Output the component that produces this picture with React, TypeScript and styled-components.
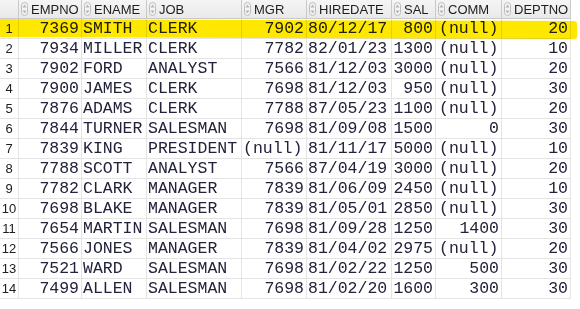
import React from "react";
import styled, { createGlobalStyle } from "styled-components";

type Emp = {
  empno: number;
  ename: string;
  job: string;
  mgr: number | null;
  hiredate: string;
  sal: number;
  comm: number | null;
  deptno: number;
};

const rows: Emp[] = [
  { empno: 7369, ename: "SMITH", job: "CLERK", mgr: 7902, hiredate: "80/12/17", sal: 800, comm: null, deptno: 20 },
  { empno: 7934, ename: "MILLER", job: "CLERK", mgr: 7782, hiredate: "82/01/23", sal: 1300, comm: null, deptno: 10 },
  { empno: 7902, ename: "FORD", job: "ANALYST", mgr: 7566, hiredate: "81/12/03", sal: 3000, comm: null, deptno: 20 },
  { empno: 7900, ename: "JAMES", job: "CLERK", mgr: 7698, hiredate: "81/12/03", sal: 950, comm: null, deptno: 30 },
  { empno: 7876, ename: "ADAMS", job: "CLERK", mgr: 7788, hiredate: "87/05/23", sal: 1100, comm: null, deptno: 20 },
  { empno: 7844, ename: "TURNER", job: "SALESMAN", mgr: 7698, hiredate: "81/09/08", sal: 1500, comm: 0, deptno: 30 },
  { empno: 7839, ename: "KING", job: "PRESIDENT", mgr: null, hiredate: "81/11/17", sal: 5000, comm: null, deptno: 10 },
  { empno: 7788, ename: "SCOTT", job: "ANALYST", mgr: 7566, hiredate: "87/04/19", sal: 3000, comm: null, deptno: 20 },
  { empno: 7782, ename: "CLARK", job: "MANAGER", mgr: 7839, hiredate: "81/06/09", sal: 2450, comm: null, deptno: 10 },
  { empno: 7698, ename: "BLAKE", job: "MANAGER", mgr: 7839, hiredate: "81/05/01", sal: 2850, comm: null, deptno: 30 },
  { empno: 7654, ename: "MARTIN", job: "SALESMAN", mgr: 7698, hiredate: "81/09/28", sal: 1250, comm: 1400, deptno: 30 },
  { empno: 7566, ename: "JONES", job: "MANAGER", mgr: 7839, hiredate: "81/04/02", sal: 2975, comm: null, deptno: 20 },
  { empno: 7521, ename: "WARD", job: "SALESMAN", mgr: 7698, hiredate: "81/02/22", sal: 1250, comm: 500, deptno: 30 },
  { empno: 7499, ename: "ALLEN", job: "SALESMAN", mgr: 7698, hiredate: "81/02/20", sal: 1600, comm: 300, deptno: 30 },
];

const columns = ["EMPNO", "ENAME", "JOB", "MGR", "HIREDATE", "SAL", "COMM", "DEPTNO"];

const GlobalStyle = createGlobalStyle`
  html, body {
    margin: 0;
    padding: 0;
    background: #ffffff;
  }
`;

function SortIcon() {
  return (
    <svg width="7" height="14" viewBox="0 0 7 14">
      <rect x="0.5" y="0.5" width="6" height="13" rx="3" fill="#f4f4f4" stroke="#bdbdbd" />
      <path d="M3.5 2.5 L5.5 5.5 L1.5 5.5 Z" fill="#b4b4b4" />
      <path d="M3.5 11.5 L5.5 8.5 L1.5 8.5 Z" fill="#b4b4b4" />
    </svg>
  );
}

export default function App() {
  const num = (v: number | null) => (v === null ? "(null)" : String(v));
  return (
    <>
      <GlobalStyle />
      <Sheet>
        <Grid>
          <HeadCell />
          {columns.map((c) => (
            <HeadCell key={c}>
              <SortIcon />
              <HeadLabel>{c}</HeadLabel>
            </HeadCell>
          ))}
          {rows.map((r, i) => (
            <React.Fragment key={r.empno}>
              <RowNum>{i + 1}</RowNum>
              <Cell $right>{r.empno}</Cell>
              <Cell>{r.ename}</Cell>
              <Cell>{r.job}</Cell>
              <Cell $right={r.mgr !== null}>{num(r.mgr)}</Cell>
              <Cell>{r.hiredate}</Cell>
              <Cell $right>{r.sal}</Cell>
              <Cell $right={r.comm !== null} $pad={r.comm === null}>
                {num(r.comm)}
              </Cell>
              <Cell $right>{r.deptno}</Cell>
            </React.Fragment>
          ))}
        </Grid>
        <Highlight />
      </Sheet>
    </>
  );
}

const Sheet = styled.div`
  position: relative;
  width: 580px;
  height: 309px;
  overflow: hidden;
  background: #ffffff;
`;

const Grid = styled.div`
  display: grid;
  grid-template-columns: 19px 63px 65px 95px 65px 85px 44px 66px 69px;
  grid-template-rows: 19px repeat(14, 20px);
  width: 571px;
`;

const HeadCell = styled.div`
  box-sizing: border-box;
  display: flex;
  align-items: center;
  gap: 3px;
  padding-left: 2px;
  background: linear-gradient(#f5f5f5, #e9e9e9);
  border-right: 1px solid #c9c9c9;
  border-bottom: 1px solid #c9c9c9;
  overflow: hidden;
`;

const HeadLabel = styled.span`
  font-family: "Liberation Sans", Arial, sans-serif;
  font-size: 13px;
  color: #1e1e1e;
  white-space: nowrap;
`;

const RowNum = styled.div`
  box-sizing: border-box;
  display: flex;
  align-items: center;
  justify-content: center;
  border-right: 1px solid #e4e4e4;
  border-bottom: 1px solid #e4e4e4;
  font-family: "Liberation Sans", Arial, sans-serif;
  font-size: 13px;
  color: #202020;
`;

const Cell = styled.div<{ $right?: boolean; $pad?: boolean }>`
  box-sizing: border-box;
  display: flex;
  align-items: center;
  justify-content: ${({ $right }) => ($right ? "flex-end" : "flex-start")};
  padding: 0 2px 0 ${({ $pad }) => ($pad ? "3px" : "1px")};
  border-right: 1px solid #e4e4e4;
  border-bottom: 1px solid #e4e4e4;
  font-family: "Liberation Mono", "Courier New", monospace;
  font-size: 16.5px;
  color: #22223a;
  white-space: nowrap;
  overflow: hidden;
`;

const Highlight = styled.div`
  position: absolute;
  left: 0;
  top: 20px;
  width: 577px;
  height: 18px;
  background: #ffe800;
  mix-blend-mode: multiply;
  border-radius: 1px 3px 2px 1px;
  transform: skewY(0.2deg);
  pointer-events: none;
`;
